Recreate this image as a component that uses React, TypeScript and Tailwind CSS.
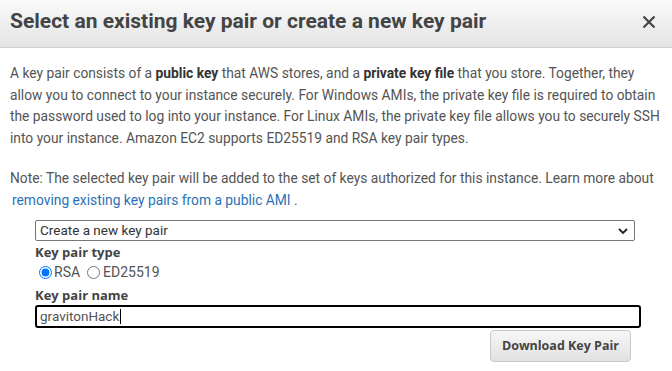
import React, { useState } from "react";

const App = () => {
  const [keyType, setKeyType] = useState("rsa");

  return (
    <div className="w-[672px] h-[371px] bg-white overflow-hidden font-['Roboto',sans-serif] text-[#444]">
      {/* header */}
      <div className="h-[48px] flex items-center justify-between pl-[10px] pr-[16px] bg-gradient-to-b from-[#fafafa] to-[#e4e4e4] border-b border-[#cfcfcf]">
        <h1 className="text-[21px] font-bold text-[#444] mb-[4px]">
          Select an existing key pair or create a new key pair
        </h1>
        <svg width="14" height="14" viewBox="0 0 14 14" className="mb-[4px]">
          <path d="M1.5 1.5 L12.5 12.5 M12.5 1.5 L1.5 12.5" stroke="#444" strokeWidth="2.2" />
        </svg>
      </div>

      <div className="pl-[10px] pr-[8px] pt-[15px] text-[13.8px] leading-[21.5px] text-[#545454] whitespace-nowrap">
        <p>
          A key pair consists of a <b className="text-[#333]">public key</b> that AWS stores, and a <b className="text-[#333]">private key file</b> that you store. Together, they
          <br />
          allow you to connect to your instance securely. For Windows AMIs, the private key file is required to obtain
          <br />
          the password used to log into your instance. For Linux AMIs, the private key file allows you to securely SSH
          <br />
          into your instance. Amazon EC2 supports ED25519 and RSA key pair types.
        </p>
        <p className="mt-[19px]">
          Note: The selected key pair will be added to the set of keys authorized for this instance. Learn more about
          <br />
          <a href="#" className="text-[#2a72b5] ml-[2px]">removing existing key pairs from a public AMI</a> .
        </p>

        <div className="ml-[25px] w-[600px] mt-[9px]">
          <div className="relative h-[21px] border border-[#767676] rounded-[2px] flex items-center pl-[4px] text-[13.5px] text-[#333]">
            Create a new key pair
            <svg width="10" height="7" viewBox="0 0 10 7" className="absolute right-[6px] top-[7px]">
              <path d="M1 1 L5 5 L9 1" stroke="#222" strokeWidth="1.8" fill="none" />
            </svg>
          </div>
          <div className="font-['Open_Sans',sans-serif] font-bold text-[13px] leading-[20px] mt-[1px] text-[#444]">Key pair type</div>
          <div className="flex items-center text-[14px] leading-[20px] text-[#545454]">
            <label className="flex items-center">
              <input
                type="radio"
                name="kt"
                checked={keyType === "rsa"}
                onChange={() => setKeyType("rsa")}
                className="w-[13px] h-[13px] m-0 ml-[4px] mr-[2px] accent-[#0075ff]"
              />
              RSA
            </label>
            <label className="flex items-center">
              <input
                type="radio"
                name="kt"
                checked={keyType === "ed"}
                onChange={() => setKeyType("ed")}
                className="w-[13px] h-[13px] m-0 ml-[7px] mr-[3px]"
              />
              ED25519
            </label>
          </div>
          <div className="font-['Open_Sans',sans-serif] font-bold text-[13px] leading-[20px] mt-[3px] text-[#444]">Key pair name</div>
          <div className="w-[606px] h-[23px] border-2 border-black rounded-[3px] pl-[3px] flex items-center text-[13.5px] text-[#545454]">
            <span>gravitonHack</span>
            <span className="w-[1px] h-[15px] bg-black ml-[1px]" />
          </div>
          <div className="flex justify-end w-[596px] mt-[2px]">
            <button className="h-[32px] px-[11px] rounded-[4px] border border-[#c9c9c9] bg-gradient-to-b from-[#f7f7f7] to-[#e2e2e2] font-['Open_Sans',sans-serif] font-bold text-[12.5px] text-[#444]">
              Download Key Pair
            </button>
          </div>
        </div>
      </div>
    </div>
  );
};

export default App;
